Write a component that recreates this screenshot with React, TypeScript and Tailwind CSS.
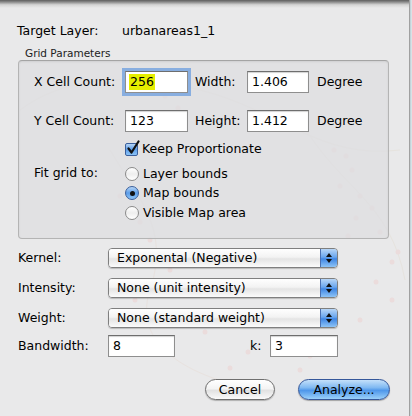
import type { ReactNode } from 'react'

const font = { fontFamily: '"Lucida Grande", "DejaVu Sans", sans-serif' }

function TextField({ value, width, focused }: { value: string; width: string; focused?: boolean }) {
  return (
    <div
      className={`${width} flex h-[22px] items-center border border-[#8e8e8e] border-t-[#6e6e6e] bg-white pl-[3px] ${
        focused ? 'shadow-[0_0_0_3px_#88aee0]' : 'shadow-[inset_0_1px_1px_rgba(0,0,0,0.18)]'
      }`}
    >
      <span className={`px-[1px] leading-[16px] ${focused ? 'bg-[#e6ee00]' : ''}`}>{value}</span>
    </div>
  )
}

function Select({ value }: { value: string }) {
  return (
    <div className="flex h-[20px] w-[230px] overflow-hidden rounded-[4px] border border-[#7f7f7f] shadow-[0_1px_1px_rgba(0,0,0,0.2)]">
      <div className="flex flex-1 items-center bg-[linear-gradient(180deg,#ffffff_0%,#f3f3f3_45%,#e4e4e4_55%,#fbfbfb_100%)] pl-[8px] leading-[16px]">
        {value}
      </div>
      <div className="flex w-[17px] flex-col items-center justify-center gap-[2px] border-l border-[#4a6fb0] bg-[linear-gradient(180deg,#b8d6f7_0%,#6aa6ee_45%,#3f86e4_55%,#8ec4f6_100%)]">
        <span className="h-0 w-0 border-x-[3px] border-b-[4px] border-x-transparent border-b-[#111]" />
        <span className="h-0 w-0 border-x-[3px] border-t-[4px] border-x-transparent border-t-[#111]" />
      </div>
    </div>
  )
}

function Radio({ checked, children }: { checked?: boolean; children: ReactNode }) {
  return (
    <div className="flex h-[19.5px] items-center gap-[4px]">
      <span
        className={`flex h-[14px] w-[14px] items-center justify-center rounded-full border ${
          checked
            ? 'border-[#3a5f9c] bg-[linear-gradient(180deg,#b6d5f6_0%,#5c9de9_50%,#8cc3f6_100%)]'
            : 'border-[#8a8a8a] bg-[linear-gradient(180deg,#ffffff_0%,#eeeeee_50%,#ffffff_100%)]'
        }`}
      >
        {checked && <span className="h-[5px] w-[5px] rounded-full bg-[#111]" />}
      </span>
      <span className="leading-[16px]">{children}</span>
    </div>
  )
}

function MapDots() {
  const dots = [
    [165, 96], [178, 108], [158, 262], [170, 270], [185, 318], [205, 332], [230, 368], [248, 352],
    [334, 150], [346, 156], [352, 170], [340, 186], [360, 196], [372, 208], [356, 218], [380, 232],
    [348, 236], [392, 262], [398, 252], [376, 282], [392, 300], [360, 320], [310, 356], [300, 370],
    [120, 196], [140, 222], [150, 240], [135, 300],
  ]
  return (
    <svg className="pointer-events-none absolute inset-0" width="410" height="416">
      <path d="M20 110 C60 80 120 70 200 90 S320 160 400 150" stroke="#e6e3de" strokeWidth="1" fill="none" />
      <path d="M110 150 C140 200 170 230 150 290 S200 380 260 390" stroke="#e8e2df" strokeWidth="1" fill="none" />
      <path d="M300 120 C340 190 390 200 405 280" stroke="#e6e3de" strokeWidth="1" fill="none" />
      {dots.map(([x, y], i) => (
        <circle key={i} cx={x} cy={y} r="2.5" fill="#ebdcdc" />
      ))}
    </svg>
  )
}

export default function App() {
  return (
    <div className="flex h-[416px] w-[412px] overflow-hidden bg-[#d8e2e6] text-[12.5px] text-black" style={font}>
      <div className="relative h-full w-[410px] border-r border-[#a0a0a0] bg-[#e9e9ea]">
        <MapDots />
        <div className="absolute inset-x-0 top-0 h-[8px] bg-[linear-gradient(180deg,#5e5e5e_0%,#8a8a8a_25%,#d4d4d4_60%,rgba(233,233,234,0)_100%)]" />

        <div className="relative flex flex-col pl-[17px] pt-[23px]">
          <div className="flex h-[16px] items-center leading-[16px]">
            <span className="w-[105px]">Target Layer:</span>
            <span>urbanareas1_1</span>
          </div>

          <div className="ml-[8px] mt-[7px] h-[14px] text-[10.5px] leading-[14px] text-[#222]">Grid Parameters</div>

          <div className="ml-[1px] h-[179px] w-[371px] rounded-[4px] border border-[#b4b4b4] border-t-[#a4a4a4] bg-[rgba(222,222,224,0.75)] pl-[15px] pt-[10px] shadow-[inset_0_1px_2px_rgba(0,0,0,0.08)]">
            <div className="flex h-[22px] items-center">
              <span className="w-[91px]">X Cell Count:</span>
              <TextField value="256" width="w-[63px]" focused />
              <span className="ml-[7px] w-[52px]">Width:</span>
              <TextField value="1.406" width="w-[62px]" />
              <span className="ml-[8px]">Degree</span>
            </div>

            <div className="mt-[17px] flex h-[22px] items-center">
              <span className="w-[91px]">Y Cell Count:</span>
              <TextField value="123" width="w-[63px]" />
              <span className="ml-[7px] w-[52px]">Height:</span>
              <TextField value="1.412" width="w-[62px]" />
              <span className="ml-[8px]">Degree</span>
            </div>

            <div className="ml-[91px] mt-[9px] flex h-[16px] items-center gap-[4px]">
              <span className="relative h-[13px] w-[13px] rounded-[2px] border border-[#3a5f9c] bg-[linear-gradient(180deg,#b6d5f6_0%,#5c9de9_50%,#8cc3f6_100%)]">
                <svg className="absolute -top-[4px] left-[0px]" width="15" height="16" viewBox="0 0 15 16">
                  <path d="M2.5 8.5 L5.5 12.5 L12.5 1.5" stroke="#111" strokeWidth="2.2" fill="none" strokeLinecap="round" strokeLinejoin="round" />
                </svg>
              </span>
              <span className="leading-[16px]">Keep Proportionate</span>
            </div>

            <div className="mt-[7px] flex">
              <span className="flex h-[19.5px] w-[91px] items-center">Fit grid to:</span>
              <div className="flex flex-col">
                <Radio>Layer bounds</Radio>
                <Radio checked>Map bounds</Radio>
                <Radio>Visible Map area</Radio>
              </div>
            </div>
          </div>

          <div className="mt-[9px] flex flex-col gap-[10px] pl-[1px]">
            <div className="flex items-center">
              <span className="w-[90px]">Kernel:</span>
              <Select value="Exponental (Negative)" />
            </div>
            <div className="flex items-center">
              <span className="w-[90px]">Intensity:</span>
              <Select value="None (unit intensity)" />
            </div>
            <div className="flex items-center">
              <span className="w-[90px]">Weight:</span>
              <Select value="None (standard weight)" />
            </div>
          </div>

          <div className="mt-[7px] flex h-[22px] items-center pl-[1px]">
            <span className="w-[90px]">Bandwidth:</span>
            <TextField value="8" width="w-[67px]" />
            <span className="ml-[75px] w-[20px]">k:</span>
            <TextField value="3" width="w-[68px]" />
          </div>

          <div className="mt-[22px] flex items-center pl-[188px]">
            <button className="h-[21px] w-[70px] rounded-full border border-[#6f6f6f] bg-[linear-gradient(180deg,#ffffff_0%,#f4f4f4_45%,#e2e2e2_55%,#fafafa_100%)] leading-[16px] shadow-[0_1px_1px_rgba(0,0,0,0.25)]">
              Cancel
            </button>
            <button className="ml-[23px] h-[21px] w-[92px] rounded-full border border-[#35579a] bg-[linear-gradient(180deg,#c4e0fa_0%,#80b9f2_40%,#4f97ea_55%,#9ad0fa_100%)] leading-[16px] shadow-[0_1px_1px_rgba(0,0,0,0.3)]">
              Analyze...
            </button>
          </div>
        </div>
      </div>
      <div className="h-full w-[1px] bg-[#c4d4da]" />
    </div>
  )
}
